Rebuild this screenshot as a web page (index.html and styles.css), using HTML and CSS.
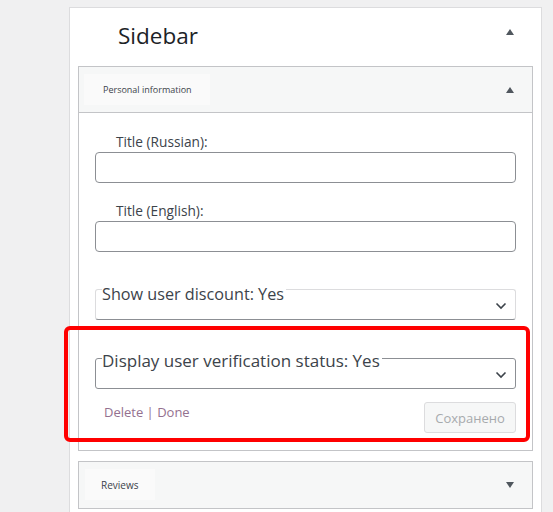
FILE: index.html
```html
<!DOCTYPE html>
<html>
<head>
<meta charset="utf-8">
<link rel="stylesheet" href="styles.css">
</head>
<body>
<div class="page">
  <div class="outer">
    <div class="outer-head">
      <span class="outer-title">Sidebar</span>
      <span class="tri up"></span>
    </div>
    <div class="panel">
      <div class="panel-head">
        <span class="chip">Personal information</span>
        <span class="tri up"></span>
      </div>
      <div class="panel-body">
        <label class="lbl first">Title (Russian):</label>
        <div class="input"></div>
        <label class="lbl">Title (English):</label>
        <div class="input"></div>
        <div class="select s1">
          <span class="sel-text">Show user discount: Yes</span>
          <svg class="chev" width="12" height="8" viewBox="0 0 12 8"><path d="M1.5 1.5 L6 6 L10.5 1.5" fill="none" stroke="#3c434a" stroke-width="1.6"/></svg>
        </div>
        <div class="hl">
          <div class="select s2">
            <span class="sel-text">Display user verification status: Yes</span>
            <svg class="chev" width="12" height="8" viewBox="0 0 12 8"><path d="M1.5 1.5 L6 6 L10.5 1.5" fill="none" stroke="#3c434a" stroke-width="1.6"/></svg>
          </div>
          <div class="actions">
            <span class="links">Delete | Done</span>
            <span class="btn">Сохранено</span>
          </div>
        </div>
      </div>
    </div>
    <div class="panel reviews">
      <div class="panel-head">
        <span class="chip small">Reviews</span>
        <span class="tri down"></span>
      </div>
    </div>
  </div>
</div>
</body>
</html>
```
FILE: styles.css
```css
html, body { margin: 0; padding: 0; }
body {
  background: #f0f0f1;
  font-family: "Open Sans", "Noto Sans", sans-serif;
  width: 553px;
  height: 512px;
  overflow: hidden;
}
.page { padding: 7px 0 0 69px; }
.outer {
  width: 471px;
  background: #fff;
  border: 1px solid #dcdcde;
  border-bottom: none;
  height: 520px;
}
.outer-head {
  height: 58px;
  display: flex;
  align-items: center;
  justify-content: space-between;
  padding: 0 27px 0 48px;
}
.outer-title {
  font-size: 22.5px;
  line-height: 30px;
  color: #1d2327;
  margin-top: -3px;
}
.tri { width: 0; height: 0; border-left: 4px solid transparent; border-right: 4px solid transparent; }
.tri.up { border-bottom: 6px solid #50575e; }
.tri.down { border-top: 6px solid #50575e; }
.outer-head .tri { margin-top: -10px; }
.panel {
  margin: 0 8px;
  border: 1px solid #c3c4c7;
  background: #fff;
}
.panel-head {
  height: 45px;
  background: #f6f7f7;
  display: flex;
  align-items: center;
  justify-content: space-between;
  padding: 0 18px 0 5px;
}
.chip {
  background: #fafafa;
  height: 31px;
  display: flex;
  align-items: center;
  padding: 0 18px 0 19px;
  font-size: 9px;
  color: #3c434a;
  white-space: nowrap;
  margin-top: -1px;
}
.chip.small { padding: 0 17px 0 16px; font-size: 10px; }
.panel-body {
  border-top: 1px solid #c3c4c7;
  padding: 20px 16px 0 16px;
}
.lbl {
  display: block;
  font-size: 13.7px;
  line-height: 18px;
  color: #3c434a;
  padding-left: 21px;
  margin-top: 19px;
  height: 18px;
}
.lbl.first { margin-top: 0; }
.input {
  margin-top: 1px;
  height: 29px;
  border: 1px solid #8c8f94;
  border-radius: 4px;
}
.select {
  position: relative;
  height: 29px;
  border: 1px solid #c3c4c7;
  border-radius: 3px;
  padding-left: 6px;
}
.s1 { margin-top: 37px; border-color: #dcdcde; border-bottom-color: #8c8f94; }
.s2 { border-color: #8c8f94; }
.sel-text {
  display: block;
  font-size: 16.2px;
  line-height: 20px;
  color: #3c434a;
  margin-top: -6px;
  background: #fff;
  width: max-content;
  padding-right: 2px;
}
.s2 .sel-text { font-size: 17px; margin-top: -8px; }
.chev { position: absolute; right: 8px; top: 12px; }
.hl { position: relative; padding: 38px 0 17px 0; }
.hl::after {
  content: "";
  position: absolute;
  left: -31px;
  right: -14px;
  top: 6px;
  height: 108px;
  border: 4px solid #ff0000;
  border-radius: 6px;
  pointer-events: none;
}
.actions {
  display: flex;
  justify-content: space-between;
  align-items: flex-start;
  margin-top: 13px;
}
.links {
  font-size: 13px;
  line-height: 18px;
  color: #94718f;
  padding-left: 9px;
  margin-top: 1px;
}
.btn {
  height: 31px;
  width: 92px;
  box-sizing: border-box;
  border: 1px solid #dcdcde;
  border-radius: 3px;
  background: #f6f7f7;
  color: #a7aaad;
  font-size: 13px;
  display: flex;
  align-items: center;
  justify-content: center;
}
.reviews { margin-top: 10px; }
.reviews .panel-head { height: 46px; padding-left: 6px; }
```
